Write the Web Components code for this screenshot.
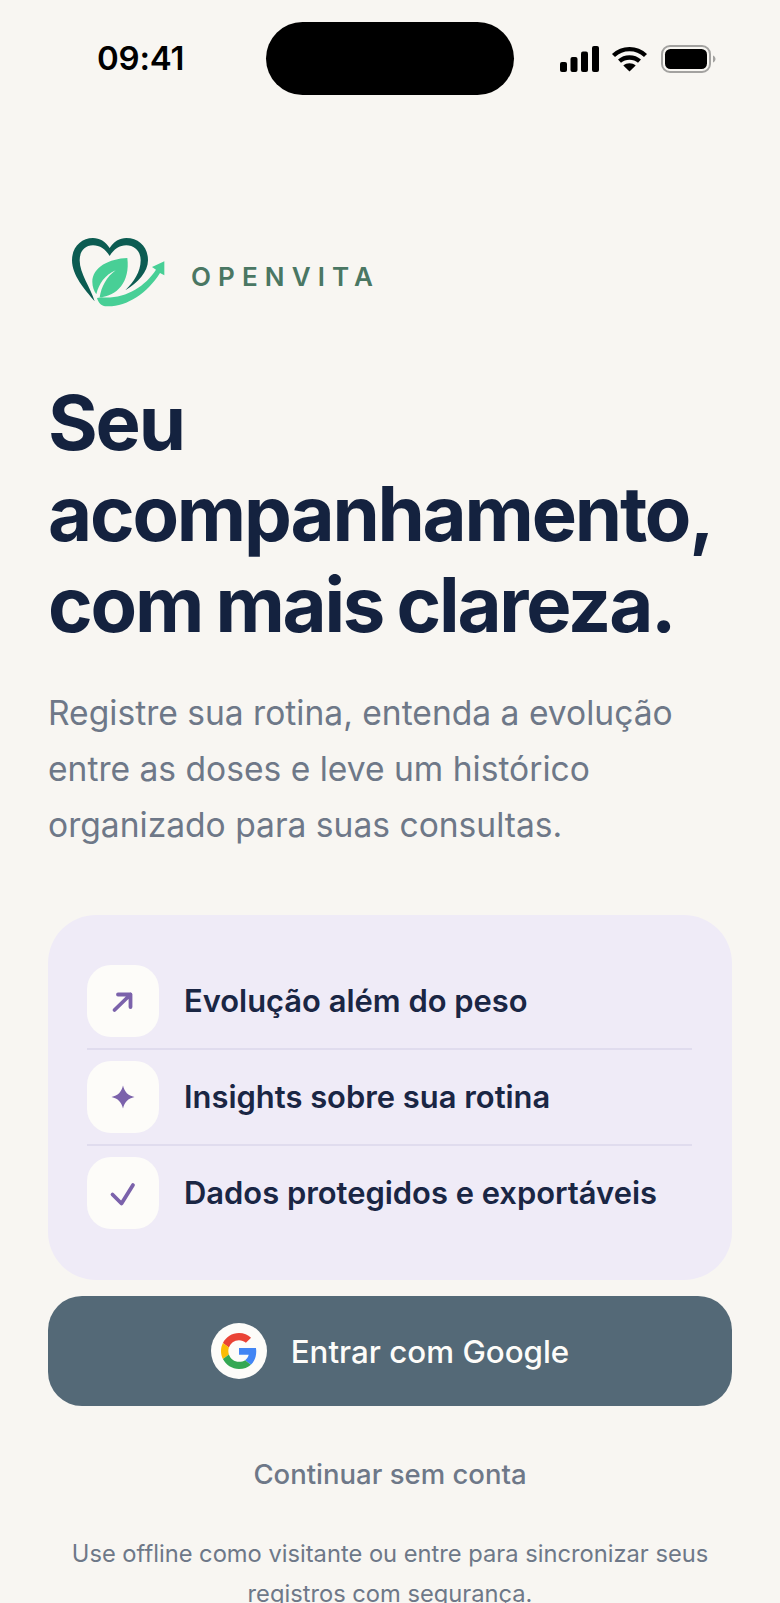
<!DOCTYPE html>
<html lang="pt-BR">
<head>
<meta charset="utf-8">
<title>OpenVita</title>
<style>
  html, body { margin: 0; height: 1603px; overflow: hidden; background: #f8f6f2; }
  body { font-family: Inter, "Noto Sans", sans-serif; }
  login-screen { height: 1603px; }
</style>
</head>
<body>
<login-screen>
  <status-bar slot="status" time="09:41"></status-bar>
  <brand-logo slot="brand" name="OPENVITA"></brand-logo>
  <hero-text slot="hero">
    <span slot="title">Seu<br>acompanhamento,<br>com mais clareza.</span>
    Registre sua rotina, entenda a evolução<br>entre as doses e leve um histórico<br>organizado para suas consultas.
  </hero-text>
  <feature-card slot="features">
    <feature-row icon="arrow">Evolução além do peso</feature-row>
    <feature-row icon="spark">Insights sobre sua rotina</feature-row>
    <feature-row icon="check">Dados protegidos e exportáveis</feature-row>
  </feature-card>
  <google-button slot="actions">Entrar com Google</google-button>
  <login-footer slot="actions" link="Continuar sem conta">
    Use offline como visitante ou entre para sincronizar seus<br>registros com segurança.
  </login-footer>
</login-screen>

<script>
/**
 * Outer page shell, lays the sections out in a column
 */
class LoginScreen extends HTMLElement {
  constructor() {
    super();
    this.attachShadow({ mode: 'open' });
    this.shadowRoot.innerHTML = `
      <style>
        :host { display: flex; flex-direction: column; color: #14223f; }
        .content { display: flex; flex-direction: column; padding: 0 48px; }
      </style>
      <slot name="status"></slot>
      <div class="content">
        <slot name="brand"></slot>
        <slot name="hero"></slot>
        <slot name="features"></slot>
        <slot name="actions"></slot>
      </div>
    `;
  }
}

/**
 * Fake iOS status bar with the dynamic island
 */
class StatusBar extends HTMLElement {
  constructor() {
    super();
    this.attachShadow({ mode: 'open' });
  }

  connectedCallback() {
    this.shadowRoot.innerHTML = `
      <style>
        :host { display: block; }
        .bar {
          display: grid;
          grid-template-columns: 266px 248px 1fr;
          align-items: center;
          height: 73px;
          padding-top: 22px;
        }
        .time {
          font: 600 33px/1 Inter, sans-serif;
          color: #000;
          padding-left: 97px;
          letter-spacing: -0.2px;
        }
        .island { height: 73px; border-radius: 37px / 37px; background: #000; }
        .icons { display: flex; align-items: center; padding-left: 46px; }
        .wifi { margin: 0 13px 0 12px; }
        svg { display: block; }
      </style>
      <div class="bar">
        <div class="time">${this.getAttribute('time')}</div>
        <div class="island"></div>
        <div class="icons">
          <svg width="39" height="26" viewBox="0 0 39 26" fill="#000">
            <rect x="0" y="16" width="7" height="10" rx="2"/>
            <rect x="10.5" y="11" width="7" height="15" rx="2"/>
            <rect x="21" y="5.5" width="7" height="20.5" rx="2"/>
            <rect x="32" y="0" width="7" height="26" rx="2"/>
          </svg>
          <svg class="wifi" width="37" height="26" viewBox="0 0 36 26" fill="none" stroke="#000" stroke-width="4.4">
            <path d="M2 9.5C11 1 25 1 34 9.5"/>
            <path d="M8 15.2C13.5 10.2 22.5 10.2 28 15.2"/>
            <path d="M18 25.5L11.8 19.4C15.2 16.4 20.8 16.4 24.2 19.4Z" fill="#000" stroke="none"/>
          </svg>
          <svg width="55" height="28" viewBox="0 0 55 28">
            <rect x="1" y="1" width="48" height="26" rx="8" fill="none" stroke="#a3a2a0" stroke-width="2"/>
            <rect x="4" y="4" width="42" height="20" rx="5.5" fill="#000"/>
            <path d="M52 10.5c1.5 .6 2.5 2 2.5 3.5s-1 2.9-2.5 3.5z" fill="#a3a2a0"/>
          </svg>
        </div>
      </div>
    `;
  }
}

/**
 * Heart and leaf logo with the wordmark
 */
class BrandLogo extends HTMLElement {
  constructor() {
    super();
    this.attachShadow({ mode: 'open' });
  }

  connectedCallback() {
    this.shadowRoot.innerHTML = `
      <style>
        :host { display: flex; align-items: center; margin: 143px 0 0 24px; height: 69px; }
        svg { display: block; flex: none; }
        .name {
          margin-left: 26px;
          font: 600 26px/1 Inter, sans-serif;
          letter-spacing: 7.1px;
          color: #4a7763;
          padding-top: 9px;
        }
      </style>
      <svg width="93" height="69" viewBox="37 38 279 207">
        <path fill="#0c5c52" d="M105 228C75 192 37 150 37 105C37 65 65 38 100 38C120 38 138 49 150 68C162 49 180 38 200 38C238 38 265 65 265 105C265 140 235 172 197 195C222 170 243 140 243 105C243 78 225 60 200 60C180 60 162 72 150 92C138 72 120 60 100 60C75 60 60 78 60 105C60 145 92 185 105 228Z"/>
        <path fill="#48cf96" d="M203 98C150 100 98 125 98 170C98 185 103 197 110 207C118 175 135 150 168 135C140 155 125 185 120 216C172 212 212 170 203 98Z"/>
        <path fill="#48cf96" d="M112 218C116 232 125 243 142 243C200 245 262 205 301 143L314 150L314 108L277 125L289 133C255 185 195 222 125 216Z"/>
      </svg>
      <div class="name">${this.getAttribute('name')}</div>
    `;
  }
}

/**
 * Big headline and the paragraph below it
 */
class HeroText extends HTMLElement {
  constructor() {
    super();
    this.attachShadow({ mode: 'open' });
    this.shadowRoot.innerHTML = `
      <style>
        :host { display: block; }
        h1 {
          margin: 70px 0 0;
          font: 700 76px/91px Inter, sans-serif;
          letter-spacing: -2.2px;
          word-spacing: -2.5px;
          color: #14223f;
        }
        p {
          margin: 35px 0 0;
          font: 400 33.6px/56px Inter, sans-serif;
          color: #6e7888;
        }
      </style>
      <h1><slot name="title"></slot></h1>
      <p><slot></slot></p>
    `;
  }
}

/**
 * Lilac card that holds the feature rows
 */
class FeatureCard extends HTMLElement {
  constructor() {
    super();
    this.attachShadow({ mode: 'open' });
    this.shadowRoot.innerHTML = `
      <style>
        :host {
          display: flex;
          flex-direction: column;
          margin-top: 62px;
          padding: 39px 40px 40px 39px;
          border-radius: 48px;
          background: #efebf7;
        }
        ::slotted(feature-row:not(:last-child)) { border-bottom: 2px solid #e0dcee; }
      </style>
      <slot></slot>
    `;
  }
}

/**
 * One feature: small white tile with an icon plus a label
 */
class FeatureRow extends HTMLElement {
  constructor() {
    super();
    this.attachShadow({ mode: 'open' });
  }

  connectedCallback() {
    const icons = {
      arrow: '<path d="M9.5 27L25.5 11.5M13 11.5H25.5V24" fill="none" stroke="#7b62ab" stroke-width="3.8" stroke-linecap="round" stroke-linejoin="round"/>',
      spark: '<path d="M18 6.5C19.5 13 23 16.5 29.5 18C23 19.5 19.5 23 18 29.5C16.5 23 13 19.5 6.5 18C13 16.5 16.5 13 18 6.5Z" fill="#7b62ab"/>',
      check: '<path d="M7.5 19.5L16.5 28.5L28 10" fill="none" stroke="#7b62ab" stroke-width="3.8" stroke-linecap="round" stroke-linejoin="round"/>'
    };
    this.shadowRoot.innerHTML = `
      <style>
        :host { display: flex; align-items: center; gap: 25px; padding: 11px 0; }
        .tile {
          flex: none;
          display: flex;
          align-items: center;
          justify-content: center;
          width: 72px;
          height: 72px;
          border-radius: 24px;
          background: #fdfcf9;
        }
        .label { font: 600 30.9px/1 Inter, sans-serif; color: #1a2644; }
      </style>
      <div class="tile">
        <svg width="36" height="36" viewBox="0 0 36 36">${icons[this.getAttribute('icon')]}</svg>
      </div>
      <div class="label"><slot></slot></div>
    `;
  }
}

/**
 * Main sign in button
 */
class GoogleButton extends HTMLElement {
  constructor() {
    super();
    this.attachShadow({ mode: 'open' });
    this.shadowRoot.innerHTML = `
      <style>
        :host {
          display: flex;
          align-items: center;
          justify-content: center;
          gap: 24px;
          height: 110px;
          margin-top: 16px;
          border-radius: 34px;
          background: #546977;
          color: #fdfcf9;
          font: 550 31.3px/1 Inter, sans-serif;
        }
        .mark {
          display: flex;
          align-items: center;
          justify-content: center;
          width: 56px;
          height: 56px;
          border-radius: 50%;
          background: #fdfcf9;
        }
        .label { padding-top: 4px; }
      </style>
      <div class="mark">
        <svg width="36" height="36" viewBox="0 0 48 48">
          <path fill="#ea4335" d="M24 9.5c3.54 0 6.71 1.22 9.21 3.6l6.85-6.85C35.9 2.38 30.47 0 24 0 14.62 0 6.51 5.38 2.56 13.22l7.98 6.19C12.43 13.72 17.74 9.5 24 9.5z"/>
          <path fill="#4285f4" d="M46.98 24.55c0-1.57-.15-3.09-.38-4.55H24v9.02h12.94c-.58 2.96-2.26 5.48-4.78 7.18l7.73 6c4.51-4.18 7.09-10.36 7.09-17.65z"/>
          <path fill="#fbbc05" d="M10.53 28.59c-.48-1.45-.76-2.99-.76-4.59s.27-3.14.76-4.59l-7.98-6.19C.92 16.46 0 20.12 0 24c0 3.88.92 7.54 2.56 10.78l7.97-6.19z"/>
          <path fill="#34a853" d="M24 48c6.48 0 11.93-2.13 15.89-5.81l-7.73-6c-2.15 1.45-4.92 2.3-8.16 2.3-6.26 0-11.57-4.22-13.47-9.91l-7.98 6.19C6.51 42.62 14.62 48 24 48z"/>
        </svg>
      </div>
      <div class="label"><slot></slot></div>
    `;
  }
}

/**
 * Skip link and the small print at the bottom
 */
class LoginFooter extends HTMLElement {
  constructor() {
    super();
    this.attachShadow({ mode: 'open' });
  }

  connectedCallback() {
    this.shadowRoot.innerHTML = `
      <style>
        :host { display: block; text-align: center; color: #6e7888; }
        .link { margin-top: 52px; font: 500 27.5px/1.2 Inter, sans-serif; }
        p { margin: 43px 0 0; font: 400 23.7px/40px Inter, sans-serif; }
      </style>
      <div class="link">${this.getAttribute('link')}</div>
      <p><slot></slot></p>
    `;
  }
}

customElements.define('login-screen', LoginScreen);
customElements.define('status-bar', StatusBar);
customElements.define('brand-logo', BrandLogo);
customElements.define('hero-text', HeroText);
customElements.define('feature-card', FeatureCard);
customElements.define('feature-row', FeatureRow);
customElements.define('google-button', GoogleButton);
customElements.define('login-footer', LoginFooter);
</script>
</body>
</html>
